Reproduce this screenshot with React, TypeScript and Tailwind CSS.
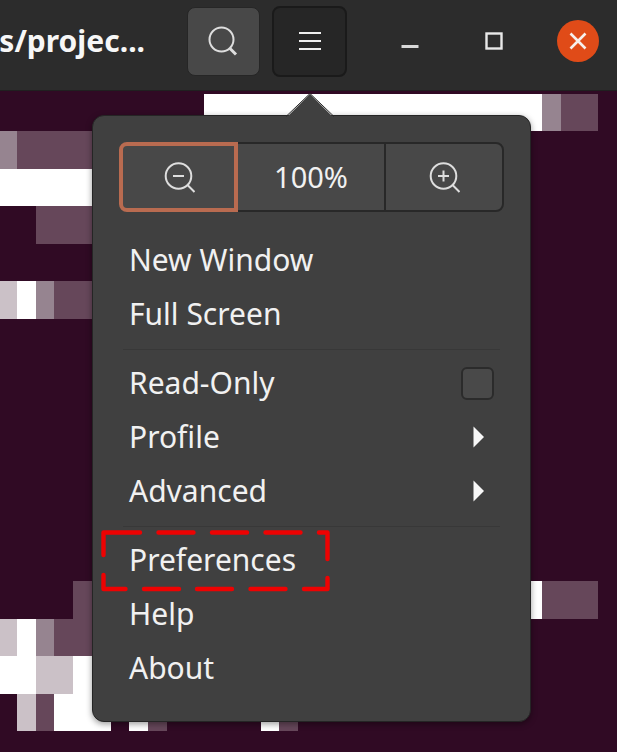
import type { ReactNode } from "react";

const WHITE = "#ffffff";
const LIGHT = "#cbc1c7";
const MID = "#968490";
const DIM = "#66475a";

// Blocks printed in the terminal: x, y, width, fill
const blocks: [number, number, number, string][] = [
  [204, 2.5, 338, WHITE], [542, 2.5, 18.7, MID], [560.7, 2.5, 37.3, DIM],
  [0, 40, 16.8, MID], [16.8, 40, 85, DIM],
  [0, 77.5, 102, WHITE],
  [35.6, 115, 66, DIM],
  [0, 190, 16.8, LIGHT], [16.8, 190, 18.8, WHITE], [35.6, 190, 18.6, MID], [54.2, 190, 48, DIM],
  [73, 490.3, 29, DIM], [500, 490.3, 42.2, WHITE], [542.2, 490.3, 56, DIM],
  [0, 527.7, 16.8, LIGHT], [16.8, 527.7, 18.8, WHITE], [35.6, 527.7, 18.6, MID], [54.2, 527.7, 48, DIM],
  [0, 565.2, 35.6, WHITE], [35.6, 565.2, 37.4, LIGHT], [73, 565.2, 40, WHITE],
  [16.8, 602.7, 18.8, LIGHT], [35.6, 602.7, 18.6, DIM], [54.2, 602.7, 56.4, WHITE],
  [129.3, 602.7, 18.7, WHITE], [148, 602.7, 18.8, DIM],
  [260.5, 602.7, 18.8, WHITE], [279.3, 602.7, 18.7, DIM],
];

function Terminal() {
  return (
    <svg className="block h-auto w-full" viewBox="0 0 617 661" shapeRendering="crispEdges" aria-hidden="true">
      {blocks.map(([x, y, w, fill], i) => (
        <rect key={i} x={x} y={y} width={w} height={37.5} fill={fill} />
      ))}
    </svg>
  );
}

function Lens({ children }: { children?: ReactNode }) {
  return (
    <svg width="32" height="32" viewBox="0 0 32 32" fill="none" stroke="#dedede" strokeWidth="2" aria-hidden="true">
      <circle cx="15.500" cy="15" r="12.8" />
      {children}
    </svg>
  );
}

function Separator() {
  return <hr className="mx-1 my-[7px] h-px border-0 bg-[#383838]" />;
}

function Item({ label, children }: { label: string; children?: ReactNode }) {
  return (
    <button type="button" role="menuitem" className="relative flex h-[54px] w-full items-center justify-between pr-5 pb-0.5 pl-[10px] text-left">
      {label}
      {children}
    </button>
  );
}

function Arrow() {
  return (
    <svg width="11" height="22" viewBox="0 0 11 22" fill="#f7f7f7" aria-hidden="true">
      <path d="M.5 .5 11 11 .5 21.500Z" />
    </svg>
  );
}

function Callout() {
  return (
    <svg
      className="absolute -top-1 -left-[18px]"
      width="230"
      height="64"
      viewBox="0 0 230 64"
      fill="none"
      stroke="#ee0202"
      strokeWidth="4.4"
      strokeLinecap="round"
      strokeLinejoin="round"
      aria-hidden="true"
    >
      <path d="M2.500 25V2.500H39M57.500 2.500h35M111 2.500h35M164.500 2.500h35M218 2.500h8.500v26.500M226.500 48v11H203M184.500 59h-35M131 59H96M78 59H43M24.500 59h-22V45" />
    </svg>
  );
}

function Menu() {
  return (
    <div
      role="menu"
      className="absolute top-6 right-[86px] w-[439px] rounded-xl border border-[#252525] bg-[#404040] px-[26px] pt-[26px] pb-[25px] text-[30px] leading-9 text-[#f1f1f1] shadow-[0_2px_6px_rgba(0,0,0,0.4)]"
    >
      <svg className="absolute -top-6 left-[192px]" width="50" height="26" viewBox="0 0 50 26" aria-hidden="true">
        <path d="M1 26 25 2 49 26Z" fill="#404040" />
        <path d="M1 24.500 25 1.500 49 24.500" fill="none" stroke="#2a2a2a" strokeWidth="1" />
      </svg>
      <div className="mb-[22px] flex h-[70px] text-[29px]">
        <button type="button" aria-label="Zoom out" className="flex w-[119px] items-center justify-center rounded-l-lg border-4 border-[#b96b50] bg-[#484848]">
          <Lens>
            <path d="m24.500 24 7 7M10 15h11" />
          </Lens>
        </button>
        <button type="button" className="flex-1 border-y-2 border-[#282828] bg-[#484848]">
          100%
        </button>
        <button type="button" aria-label="Zoom in" className="flex w-[120px] items-center justify-center rounded-r-lg border-2 border-[#282828] bg-[#484848]">
          <Lens>
            <path d="m24.500 24 7 7M10 15h11M15.500 9.500v11" />
          </Lens>
        </button>
      </div>
      <Item label="New Window" />
      <Item label="Full Screen" />
      <Separator />
      <label className="flex h-[54px] items-center justify-between pr-[10px] pb-0.5 pl-[10px]">
        Read-Only
        <input type="checkbox" className="size-[33px] appearance-none rounded-md border-2 border-[#2b2b2b] bg-[#494949]" />
      </label>
      <Item label="Profile">
        <Arrow />
      </Item>
      <Item label="Advanced">
        <Arrow />
      </Item>
      <Separator />
      <Item label="Preferences">
        <Callout />
      </Item>
      <Item label="Help" />
      <Item label="About" />
    </div>
  );
}

export default function App() {
  return (
    <div className="flex min-h-screen flex-col overflow-hidden bg-[#300a24] font-['Noto_Sans','Open_Sans',sans-serif]">
      <header className="flex h-[91px] items-center gap-[42px] border-b border-[#202020] bg-[#2c2c2c] pr-[18px] pb-2">
        <h1 className="flex min-w-0 flex-1 justify-end overflow-hidden text-[30px] leading-10 font-bold whitespace-nowrap text-[#f7f7f7]">
          s/projec...
        </h1>
        <div className="flex items-center gap-3">
          <button type="button" aria-label="Search" className="flex h-[69px] w-[73px] items-center justify-center rounded-lg border border-[#262626] bg-[#484848]">
            <svg width="32" height="32" viewBox="0 0 32 32" fill="none" stroke="#dedede" aria-hidden="true">
              <circle cx="13.500" cy="14.500" r="12" strokeWidth="2" />
              <path d="m21.500 23 6.500 6.500" strokeWidth="3" />
            </svg>
          </button>
          <button type="button" aria-label="Menu" className="flex h-[71px] w-[75px] items-center justify-center rounded-lg border-2 border-[#1a1a1a] bg-[#262626]">
            <svg width="22" height="22" viewBox="0 0 22 22" stroke="#eeeeee" strokeWidth="2" aria-hidden="true">
              <path d="M0 3h22M0 11h22M0 19h22" />
            </svg>
          </button>
        </div>
        <div className="flex items-center gap-[42px]">
          <button type="button" aria-label="Minimize" className="flex size-[42px] items-center justify-center">
            <svg width="18" height="18" viewBox="0 0 18 18" stroke="#d8d8d8" strokeWidth="3" aria-hidden="true">
              <path d="M.5 14.500h17" />
            </svg>
          </button>
          <button type="button" aria-label="Maximize" className="flex size-[42px] items-center justify-center">
            <svg width="18" height="18" viewBox="0 0 18 18" fill="none" stroke="#e8e8e8" strokeWidth="2.400" aria-hidden="true">
              <rect x="1.500" y="1.500" width="15" height="15" />
            </svg>
          </button>
          <button type="button" aria-label="Close" className="flex size-[42px] items-center justify-center rounded-full bg-[#e04b18]">
            <svg width="18" height="18" viewBox="0 0 18 18" stroke="#f6efec" strokeWidth="2.600" aria-hidden="true">
              <path d="m1.500 1.500 15 15M16.500 1.500l-15 15" />
            </svg>
          </button>
        </div>
      </header>
      <main className="relative flex-1">
        <Terminal />
        <Menu />
      </main>
    </div>
  );
}
